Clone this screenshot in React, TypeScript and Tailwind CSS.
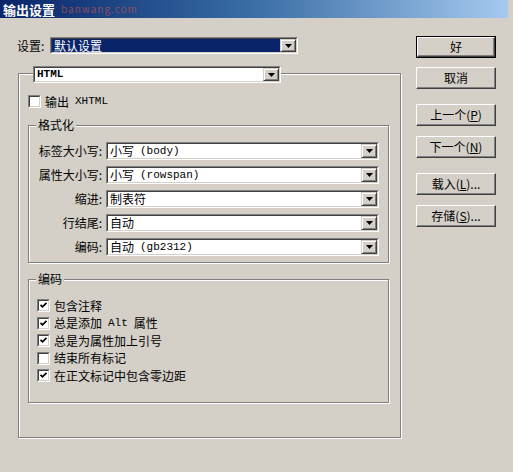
import type { ReactNode } from "react";

const cjk = "font-['Noto_Sans_CJK_SC','Liberation_Sans',sans-serif]";
const mono = "font-['Liberation_Mono','Noto_Sans_CJK_SC',monospace] text-[11px]";

function Arrow() {
  return (
    <div className="w-[16px] flex items-center justify-center bg-[#d4d0c8] border border-t-[#d4d0c8] border-l-[#d4d0c8] border-r-[#404040] border-b-[#404040] shadow-[inset_1px_1px_0_#fff,inset_-1px_-1px_0_#808080]">
      <svg width="7" height="4" viewBox="0 0 7 4">
        <polygon points="0,0 7,0 3.5,4" fill="#000" />
      </svg>
    </div>
  );
}

function Combo({
  className,
  children,
  selected,
}: {
  className: string;
  children: ReactNode;
  selected?: boolean;
}) {
  return (
    <div
      className={`flex border border-t-[#808080] border-l-[#808080] border-r-white border-b-white ${className}`}
    >
      <div className="flex flex-1 min-w-0 bg-white border border-t-[#404040] border-l-[#404040] border-r-[#d4d0c8] border-b-[#d4d0c8]">
        <div
          className={`flex-1 flex items-center pl-[2px] text-[12px] leading-none whitespace-nowrap ${
            selected ? "bg-[#0a246a] text-white" : "text-black"
          }`}
        >
          {children}
        </div>
        <Arrow />
      </div>
    </div>
  );
}

function Check({ checked }: { checked?: boolean }) {
  return (
    <div className="w-[13px] h-[13px] shrink-0 flex border border-t-[#808080] border-l-[#808080] border-r-white border-b-white">
      <div className="flex-1 flex items-center justify-center bg-white border border-t-[#404040] border-l-[#404040] border-r-[#d4d0c8] border-b-[#d4d0c8]">
        {checked && (
          <svg width="9" height="9" viewBox="0 0 9 9">
            <path d="M1.5 3.8 L3.5 5.8 L7.5 1.8" stroke="#000" strokeWidth="1.7" fill="none" />
          </svg>
        )}
      </div>
    </div>
  );
}

function Button({ children, primary, className }: { children: ReactNode; primary?: boolean; className: string }) {
  return (
    <div className={`w-[80px] h-[22px] flex ${primary ? "border border-black" : ""} ${className}`}>
      <div className="flex-1 flex items-center justify-center bg-[#d4d0c8] text-[12px] leading-none text-black border border-t-white border-l-white border-r-[#404040] border-b-[#404040] shadow-[inset_-1px_-1px_0_#808080]">
        {children}
      </div>
    </div>
  );
}

function Group({ title, className, children }: { title: string; className: string; children: ReactNode }) {
  return (
    <div
      className={`relative border border-[#808080] shadow-[inset_1px_1px_0_#fff,1px_1px_0_#fff] ${className}`}
    >
      <span className="absolute left-[7px] top-[-8px] px-[2px] bg-[#d4d0c8] text-[12px] leading-[14px] text-black">
        {title}
      </span>
      {children}
    </div>
  );
}

const formatRows: { label: string; value: ReactNode }[] = [
  { label: "标签大小写:", value: <>小写<span className={`${mono} ml-[6px]`}>(body)</span></> },
  { label: "属性大小写:", value: <>小写<span className={`${mono} ml-[6px]`}>(rowspan)</span></> },
  { label: "缩进:", value: "制表符" },
  { label: "行结尾:", value: "自动" },
  { label: "编码:", value: <>自动<span className={`${mono} ml-[6px]`}>(gb2312)</span></> },
];

const encodeChecks: { label: ReactNode; checked: boolean }[] = [
  { label: "包含注释", checked: true },
  { label: <>总是添加<span className={`${mono} mx-[6px]`}>Alt</span>属性</>, checked: true },
  { label: "总是为属性加上引号", checked: true },
  { label: "结束所有标记", checked: false },
  { label: "在正文标记中包含零边距", checked: true },
];

export default function App() {
  return (
    <div className={`w-[513px] h-[472px] bg-[#d4d0c8] flex flex-col overflow-hidden ${cjk}`}>
      {/* title bar */}
      <div className="h-[18px] mr-[5px] flex items-center pl-[3px] bg-gradient-to-r from-[#0a246a] via-[#3a6ea5] to-[#a6caf0]">
        <span className="text-white font-bold text-[13px] leading-none">输出设置</span>
        <span className="ml-[6px] text-[10px] leading-none text-[#c0504d]/70 tracking-[1px]">banwang.com</span>
      </div>

      <div className="flex flex-1">
        {/* left side */}
        <div className="w-[410px] pl-[17px] pt-[19px]">
          <div className="flex items-center h-[17px]">
            <span className="w-[33px] text-[12px] leading-none">设置:</span>
            <Combo className="w-[248px] h-[17px]" selected>
              默认设置
            </Combo>
          </div>

          <div className="relative ml-[1px] mt-[19px] w-[383px] h-[365px] border border-[#808080] shadow-[inset_1px_1px_0_#fff,1px_1px_0_#fff]">
            <Combo className="absolute left-[14px] top-[-8px] w-[248px] h-[17px]">
              <span className={`${mono} font-bold`}>HTML</span>
            </Combo>

            <div className="ml-[9px] mt-[21px] flex items-center h-[13px]">
              <Check />
              <span className="ml-[4px] text-[12px] leading-none flex items-center">
                输出<span className={`${mono} ml-[6px]`}>XHTML</span>
              </span>
            </div>

            <Group title="格式化" className="ml-[9px] mt-[17px] w-[361px] h-[138px] pt-[16px]">
              <div className="flex flex-col gap-[6px]">
                {formatRows.map((row) => (
                  <div key={row.label} className="flex items-center h-[18px]">
                    <span className="w-[73px] text-right text-[12px] leading-none">{row.label}</span>
                    <Combo className="ml-[4px] w-[273px] h-[18px]">{row.value}</Combo>
                  </div>
                ))}
              </div>
            </Group>

            <Group title="编码" className="ml-[9px] mt-[16px] w-[361px] h-[124px] pt-[17px] pl-[8px]">
              <div className="flex flex-col">
                {encodeChecks.map((c, i) => (
                  <div key={i} className="flex items-center h-[17.5px]">
                    <Check checked={c.checked} />
                    <span className="ml-[4px] text-[12px] leading-none whitespace-nowrap flex items-center">{c.label}</span>
                  </div>
                ))}
              </div>
            </Group>
          </div>
        </div>

        {/* right side buttons */}
        <div className="flex flex-col pl-[6px] pt-[18px]">
          <Button primary className="">
            好
          </Button>
          <Button className="mt-[9px]">取消</Button>
          <Button className="mt-[15px]">
            上一个(<u>P</u>)
          </Button>
          <Button className="mt-[10px]">
            下一个(<u>N</u>)
          </Button>
          <Button className="mt-[15px]">
            载入(<u>L</u>)...
          </Button>
          <Button className="mt-[10px]">
            存储(<u>S</u>)...
          </Button>
        </div>
      </div>
    </div>
  );
}
